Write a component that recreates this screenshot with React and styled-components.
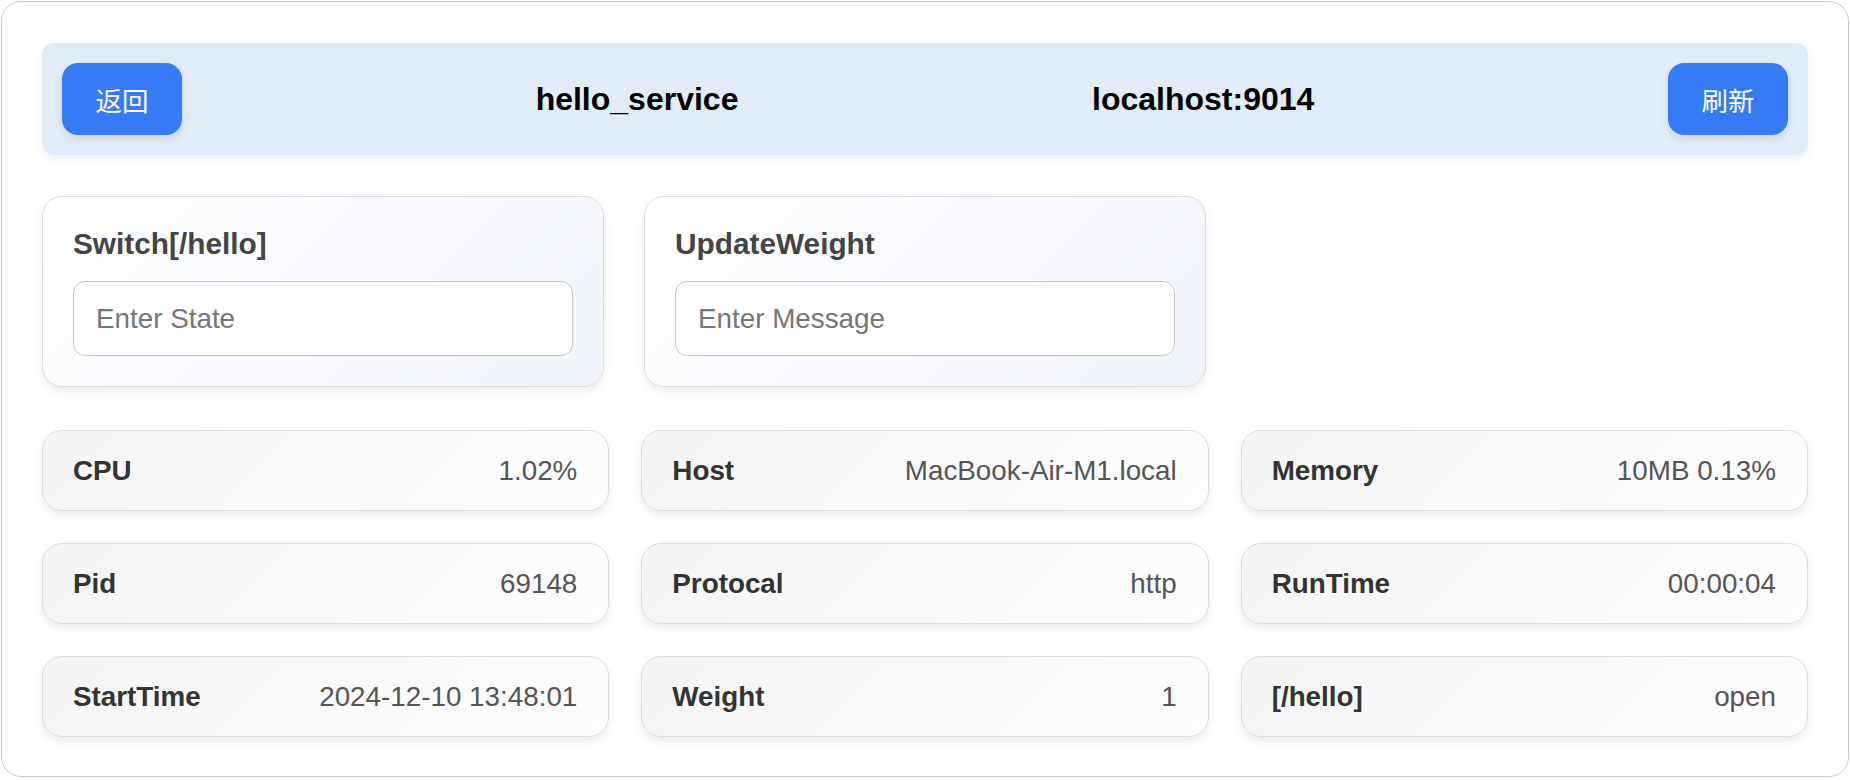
import React from "react";
import styled, { createGlobalStyle } from "styled-components";

const stats = [
  { label: "CPU", value: "1.02%" },
  { label: "Host", value: "MacBook-Air-M1.local" },
  { label: "Memory", value: "10MB 0.13%" },
  { label: "Pid", value: "69148" },
  { label: "Protocal", value: "http" },
  { label: "RunTime", value: "00:00:04" },
  { label: "StartTime", value: "2024-12-10 13:48:01" },
  { label: "Weight", value: "1" },
  { label: "[/hello]", value: "open" },
];

const forms = [
  { title: "Switch[/hello]", placeholder: "Enter State" },
  { title: "UpdateWeight", placeholder: "Enter Message" },
];

const App = () => {
  return (
    <>
      <GlobalStyle />
      <StyledPage>
        <StyledHeader>
          <StyledButton>返回</StyledButton>
          <StyledTitle>hello_service</StyledTitle>
          <StyledTitle>localhost:9014</StyledTitle>
          <StyledButton>刷新</StyledButton>
        </StyledHeader>

        <StyledFormGrid>
          {forms.map((f) => (
            <StyledFormCard key={f.title}>
              <StyledFormTitle>{f.title}</StyledFormTitle>
              <StyledInput placeholder={f.placeholder} />
            </StyledFormCard>
          ))}
        </StyledFormGrid>

        <StyledStatGrid>
          {stats.map((s) => (
            <StyledStat key={s.label}>
              <StyledLabel>{s.label}</StyledLabel>
              <StyledValue>{s.value}</StyledValue>
            </StyledStat>
          ))}
        </StyledStatGrid>
      </StyledPage>
    </>
  );
};

const GlobalStyle = createGlobalStyle`
  body {
    margin: 0;
    background: #ffffff;
    font-family: "Liberation Sans", "Noto Sans CJK SC", Arial, sans-serif;
  }
  * {
    box-sizing: border-box;
  }
`;

const StyledPage = styled.div`
  margin: 1px;
  border: 1px solid #c9c9c9;
  border-radius: 20px;
  padding: 41px 40px 39px;
  display: flex;
  flex-direction: column;
`;

const StyledHeader = styled.div`
  display: flex;
  justify-content: space-between;
  align-items: center;
  height: 112px;
  padding: 0 20px;
  background-color: #e2ecf9;
  border-radius: 12px;
  box-shadow: 0 4px 10px rgba(0, 0, 0, 0.06);
`;

const StyledButton = styled.button`
  width: 120px;
  height: 72px;
  border: none;
  border-radius: 16px;
  background-color: #377af6;
  color: #ffffff;
  font-family: "Liberation Sans", "Noto Sans CJK SC", sans-serif;
  font-size: 26.5px;
  box-shadow: 0 4px 8px rgba(0, 0, 0, 0.1);
  cursor: pointer;
`;

const StyledTitle = styled.h2`
  margin: 0;
  font-size: 32px;
  font-weight: 700;
  color: #000000;
`;

const StyledFormGrid = styled.div`
  display: grid;
  grid-template-columns: repeat(3, 1fr);
  gap: 40px;
  margin-top: 41px;
`;

const StyledFormCard = styled.div`
  padding: 30px;
  border: 1px solid #dcdcdc;
  border-radius: 20px;
  background: linear-gradient(135deg, #ffffff 0%, #f1f4fc 100%);
  box-shadow: 0 4px 10px rgba(0, 0, 0, 0.07);
`;

const StyledFormTitle = styled.h3`
  margin: 0 0 20px;
  font-size: 29.8px;
  font-weight: 700;
  color: #444444;
`;

const StyledInput = styled.input`
  display: block;
  width: 100%;
  height: 75px;
  padding: 0 22px;
  border: 1.5px solid #c6c6c6;
  border-radius: 12px;
  background: #ffffff;
  font-family: "Liberation Sans", sans-serif;
  font-size: 27.8px;
  color: #333333;
  outline: none;

  &::placeholder {
    color: #767676;
  }
`;

const StyledStatGrid = styled.div`
  display: grid;
  grid-template-columns: repeat(3, 1fr);
  gap: 32px;
  margin-top: 43px;
`;

const StyledStat = styled.div`
  display: flex;
  justify-content: space-between;
  align-items: center;
  height: 81px;
  padding: 0 31px 0 30px;
  border: 1px solid #dcdcdc;
  border-radius: 20px;
  background: linear-gradient(135deg, #f5f5f5 0%, #fdfdfd 100%);
  box-shadow: 0 4px 8px rgba(0, 0, 0, 0.08);
  font-size: 27.8px;
`;

const StyledLabel = styled.span`
  font-weight: 700;
  color: #333333;
`;

const StyledValue = styled.span`
  color: #555555;
`;

export default App;
